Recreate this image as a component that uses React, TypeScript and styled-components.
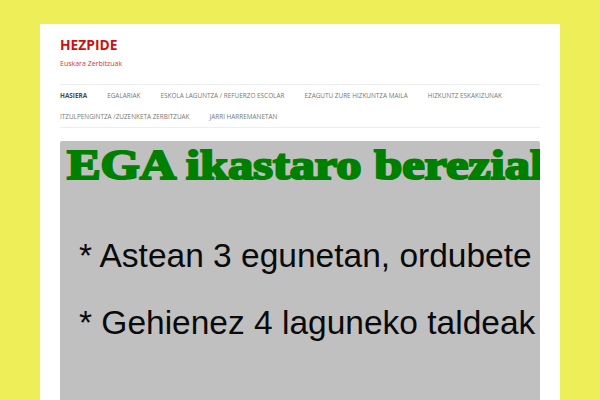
import React from "react";
import styled, { createGlobalStyle } from "styled-components";

const Global = createGlobalStyle`
  html, body { margin: 0; padding: 0; }
  body {
    background: #eeee58;
    font-family: "Open Sans", "Liberation Sans", sans-serif;
    padding-top: 24px;
    height: 376px;
    overflow: hidden;
  }
`;

const Page = styled.div`
  width: 480px;
  margin: 0 auto;
  padding: 0 20px;
  background: #fff;
  height: 376px;
  overflow: hidden;
`;

const Header = styled.header`
  padding-top: 12px;
`;

const Title = styled.h1`
  margin: 0;
  font-size: 13.8px;
  line-height: 18px;
  font-weight: 700;
  color: #cc1111;
`;

const Tagline = styled.h2`
  margin: 4px 0 0;
  font-size: 7px;
  line-height: 12px;
  font-weight: 400;
  color: #dd3333;
`;

const Nav = styled.nav`
  margin-top: 14px;
  border-top: 1px solid #ededed;
  border-bottom: 1px solid #ededed;
`;

const Menu = styled.ul`
  list-style: none;
  margin: 0;
  padding: 0;
  display: flex;
  flex-wrap: wrap;
  column-gap: 20px;
`;

const Item = styled.li<{ $current?: boolean }>`
  font-size: 6.4px;
  line-height: 21px;
  text-transform: uppercase;
  white-space: nowrap;
  color: ${(p) => (p.$current ? "#4a4a4a" : "#777")};
  font-weight: ${(p) => (p.$current ? 700 : 400)};
`;

const Slide = styled.div`
  margin-top: 13px;
  background: #c0c0c0;
  height: 300px;
  border-radius: 2px 2px 0 0;
  overflow: hidden;
`;

const Headline = styled.div`
  padding: 2px 0 0 7px;
  height: 46px;
  white-space: nowrap;
  overflow: hidden;
`;

const HeadlineText = styled.span`
  display: inline-block;
  font-family: "Liberation Serif", "DejaVu Serif", serif;
  font-weight: 700;
  font-size: 42px;
  line-height: 44px;
  color: #008000;
  -webkit-text-stroke: 2.2px #008000;
  transform: scaleX(1.2);
  transform-origin: left center;
`;

const Bullet = styled.div<{ $top: number }>`
  margin-top: ${(p) => p.$top}px;
  padding-left: 19px;
  font-family: "Liberation Sans", Arial, sans-serif;
  font-size: 33.5px;
  line-height: 36px;
  color: #0a0a0a;
  white-space: nowrap;
`;

const items = [
  "Hasiera",
  "Egalariak",
  "Eskola laguntza / Refuerzo escolar",
  "Ezagutu zure hizkuntza maila",
  "Hizkuntz eskakizunak",
  "Itzulpengintza /zuzenketa zerbitzuak",
  "Jarri harremanetan",
];

export default function App() {
  return (
    <>
      <Global />
      <Page>
        <Header>
          <Title>HEZPIDE</Title>
          <Tagline>Euskara Zerbitzuak</Tagline>
          <Nav>
            <Menu>
              {items.map((t, i) => (
                <Item key={t} $current={i === 0}>
                  {t}
                </Item>
              ))}
            </Menu>
          </Nav>
        </Header>
        <Slide>
          <Headline>
            <HeadlineText>EGA ikastaro bereziak</HeadlineText>
          </Headline>
          <Bullet $top={49}>* Astean 3 egunetan, ordubete</Bullet>
          <Bullet $top={31}>* Gehienez 4 laguneko taldeak</Bullet>
        </Slide>
      </Page>
    </>
  );
}
